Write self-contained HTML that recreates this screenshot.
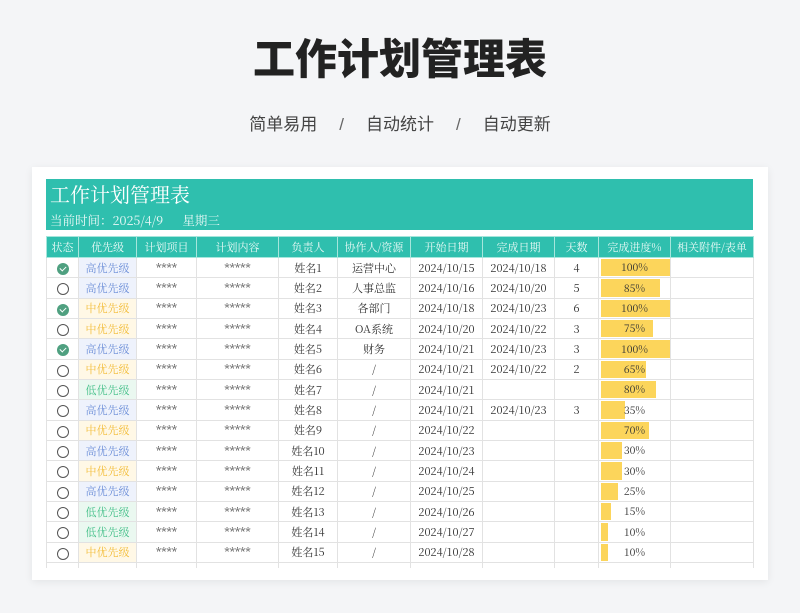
<!DOCTYPE html>
<html><head><meta charset="utf-8"><style>
*{margin:0;padding:0;box-sizing:border-box}
body{width:800px;height:613px;background:#f4f5f7;position:relative;overflow:hidden;font-family:"Noto Serif CJK SC","Liberation Serif",serif}
.t{position:absolute;left:0;width:800px;text-align:center;top:33px;font:900 42px/54px "Liberation Sans","Noto Sans CJK SC",sans-serif;color:#222}
.s{position:absolute;left:0;width:800px;text-align:center;top:112px;font:17px/26px "Liberation Sans","Noto Sans CJK SC",sans-serif;color:#444}
.s span{display:inline-block;margin:0 22px;color:#666;font-weight:300}
.card{position:absolute;left:32px;top:167px;width:736px;height:413px;background:#fff;box-shadow:0 2px 8px rgba(0,0,0,.07);overflow:hidden}
.hd{position:absolute;left:14px;top:12px;width:707px;height:51px;background:#2fbfae;color:#fff}
.hd .a{position:absolute;left:4px;top:1px;font-size:20px;line-height:28px}
.hd .b{position:absolute;left:4px;top:33px;font-size:12.5px;line-height:16px;opacity:.9}
.clip{position:absolute;left:14px;top:69px;width:708px;height:332px;overflow:hidden}
table{border-collapse:collapse;table-layout:fixed;width:707px}
td,th{border:1px solid #e2e2e2;height:20.35px;font-size:11px;text-align:center;color:#333;font-weight:normal;white-space:nowrap;overflow:hidden;padding:0;line-height:18px}
th{background:#2fbfae;color:#eafaf7;border:1px solid #a6e6dc;height:21px;font-size:11px}
.h{color:#6d8fd8;background:#eef2fc}.m{color:#f3bd3a;background:#fff8e6}.l{color:#46c08a;background:#eaf8f0}
.c{display:inline-block;width:12px;height:12px;border-radius:50%;background:#4fa080;position:relative;vertical-align:middle}
.c::after{content:"";position:absolute;left:3px;top:3px;width:5px;height:3px;border-left:1.6px solid #fff;border-bottom:1.6px solid #fff;transform:rotate(-45deg)}
.o{display:inline-block;width:12px;height:12px;border-radius:50%;border:1px solid #555;vertical-align:middle}
.p{position:relative;padding:0}
.p i{position:absolute;left:2px;top:1px;bottom:1px;background:#fcd55b}
.p b{position:relative;font-weight:normal;font-size:10.5px}
</style></head><body>
<div class="t">工作计划管理表</div>
<div class="s">简单易用<span>/</span>自动统计<span>/</span>自动更新</div>
<div class="card">
<div class="hd"><div class="a">工作计划管理表</div><div class="b">当前时间：2025/4/9 &nbsp; &nbsp; &nbsp;星期三</div></div>
<div class="clip"><table>
<colgroup><col style="width:32px"><col style="width:58px"><col style="width:60px"><col style="width:82px"><col style="width:59px"><col style="width:73px"><col style="width:72px"><col style="width:72px"><col style="width:44px"><col style="width:72px"><col style="width:83px"></colgroup>
<tr><th>状态</th><th>优先级</th><th>计划项目</th><th>计划内容</th><th>负责人</th><th>协作人/资源</th><th>开始日期</th><th>完成日期</th><th>天数</th><th>完成进度%</th><th>相关附件/表单</th></tr>
<tbody id="b"></tbody>
</table></div>
</div>
<script>
var st=[1,0,1,0,1,0,0,0,0,0,0,0,0,0,0],pr="hhmmhmlhmhmhllm",co=["运营中心","人事总监","各部门","OA系统","财务"],sd=[15,16,18,20,21,21,21,21,22,23,24,25,26,27,28],ed=[18,20,23,22,23,22,0,23],dy=[4,5,6,3,3,2,"",3],pg=[100,85,100,75,100,65,80,35,70,30,30,25,15,10,10],n={h:"高优先级",m:"中优先级",l:"低优先级"},h="";
for(var i=0;i<15;i++){h+="<tr><td><span class='"+(st[i]?"c":"o")+"'></span></td><td class='"+pr[i]+"'>"+n[pr[i]]+"</td><td>****</td><td>*****</td><td>姓名"+(i+1)+"</td><td>"+(co[i]||"/")+"</td><td>2024/10/"+sd[i]+"</td><td>"+(ed[i]?"2024/10/"+ed[i]:"")+"</td><td>"+(dy[i]===undefined?"":dy[i])+"</td><td class='p'><i style='width:"+(pg[i]*0.69)+"px'></i><b>"+pg[i]+"%</b></td><td></td></tr>";}
h+="<tr><td><span class='o'></span></td><td></td><td></td><td></td><td></td><td></td><td></td><td></td><td></td><td></td><td></td></tr>";
document.getElementById("b").innerHTML=h;
</script>
</body></html>
